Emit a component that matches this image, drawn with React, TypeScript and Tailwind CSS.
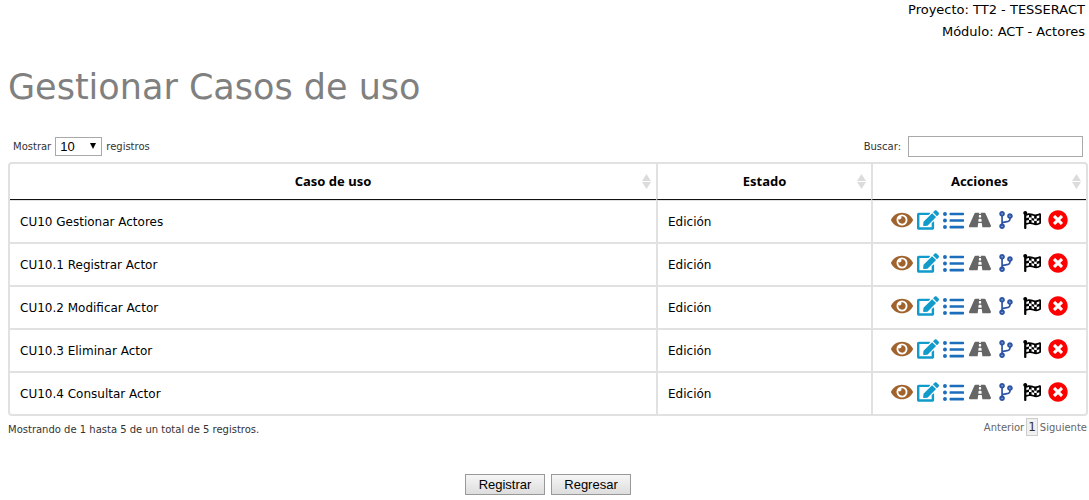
import React from "react";
import {
  FaCodeBranch,
  FaEdit,
  FaEye,
  FaFlagCheckered,
  FaListUl,
  FaRoad,
  FaTimesCircle,
} from "react-icons/fa";

const useCases = [
  "CU10 Gestionar Actores",
  "CU10.1 Registrar Actor",
  "CU10.2 Modificar Actor",
  "CU10.3 Eliminar Actor",
  "CU10.4 Consultar Actor",
];

const actions = [
  { label: "Consultar", Icon: FaEye, style: "text-[#a0632d] w-[22px] h-5" },
  { label: "Modificar", Icon: FaEdit, style: "text-[#119bcb] w-[22px] h-5" },
  { label: "Términos", Icon: FaListUl, style: "text-[#1c6dbb] w-[21px] h-[21px]" },
  { label: "Trayectorias", Icon: FaRoad, style: "text-[#666666] w-[22px] h-5" },
  { label: "Puntos de extensión", Icon: FaCodeBranch, style: "text-[#2d55a5] w-[14px] h-[18px]" },
  { label: "Terminar", Icon: FaFlagCheckered, style: "text-black w-[18px] h-[18px]" },
  { label: "Eliminar", Icon: FaTimesCircle, style: "text-[#ff0000] w-5 h-5" },
];

const columns = [
  { title: "Caso de uso", style: "" },
  { title: "Estado", style: "w-[215px] border-l-2" },
  { title: "Acciones", style: "w-[215px] border-l-2" },
];

const buttonStyle =
  "h-[21px] w-20 border border-[#999999] bg-linear-to-b from-[#f6f6f6] to-[#dddddd] font-['Liberation_Sans',sans-serif] text-[13px] leading-[18px]";

function SortIcon() {
  return (
    <svg viewBox="0 0 9 15" className="h-[15px] w-[9px] fill-[#dcdcdc]" aria-hidden="true">
      <path d="M4.5 0 9 7H0zM0 8h9l-4.500 7z" />
    </svg>
  );
}

export default function App() {
  return (
    <main className="bg-white pr-px pl-2 font-['DejaVu_Sans',sans-serif] text-black">
      <header className="pr-[3px] text-right text-[13px] leading-[22px]">
        <p className="-mt-px">Proyecto: TT2 - TESSERACT</p>
        <p>Módulo: ACT - Actores</p>
      </header>

      <h1 className="mt-5 text-[35px] leading-[48px] text-[#808080]">Gestionar Casos de uso</h1>

      <div className="mt-[25px] flex items-center justify-between pr-[5px] pl-[5px] text-[10px] text-[#333333]">
        <label className="flex items-center gap-1">
          Mostrar
          <span className="relative flex">
            <select className="h-[19px] w-[47px] appearance-none border border-[#a9a9a9] bg-white pl-1 font-['Liberation_Sans',sans-serif] text-[13px] leading-4 text-black">
              <option>10</option>
              <option>25</option>
              <option>50</option>
            </select>
            <svg viewBox="0 0 6 6" className="pointer-events-none absolute top-[6px] right-[6px] h-[6px] w-[6px]" aria-hidden="true">
              <path d="M0 0h6L3 6z" />
            </svg>
          </span>
          registros
        </label>
        <label className="flex items-center gap-[7px]">
          Buscar:
          <input type="text" className="h-[21px] w-[175px] border border-[#a9a9a9] bg-white px-1 text-[13px]" />
        </label>
      </div>

      <div className="mt-[5px] rounded-[4px] border-2 border-[#e1e1e1]">
        <table className="w-full table-fixed border-separate border-spacing-0 text-[12px]">
          <thead>
            <tr>
              {columns.map((column) => (
                <th
                  key={column.title}
                  className={`h-[36px] border-b border-[#e1e1e1] border-b-[#111111] p-0 font-['Noto_Sans',sans-serif] text-[13px] font-bold ${column.style}`}
                >
                  <div className="grid grid-cols-[10px_1fr_10px] items-center px-1">
                    <span className="col-start-2">{column.title}</span>
                    <SortIcon />
                  </div>
                </th>
              ))}
            </tr>
          </thead>
          <tbody className="[&>tr:first-child>td]:h-[44px] [&>tr:first-child>td]:border-t [&>tr:last-child>td]:h-[41px] [&>tr:last-child>td]:border-b-0">
            {useCases.map((name) => (
              <tr key={name}>
                <td className="h-[43px] border-b-2 border-[#e1e1e1] py-0 pr-2 pl-[10px]">{name}</td>
                <td className="h-[43px] border-b-2 border-l-2 border-[#e1e1e1] py-0 pr-2 pl-[10px]">Edición</td>
                <td className="h-[43px] border-b-2 border-l-2 border-[#e1e1e1] p-0">
                  <div className="flex items-center justify-center pb-[3px]">
                    {actions.map(({ label, Icon, style }) => (
                      <button key={label} type="button" aria-label={label} className="flex h-6 w-[26px] items-center justify-center">
                        <Icon className={style} />
                      </button>
                    ))}
                  </div>
                </td>
              </tr>
            ))}
          </tbody>
        </table>
      </div>

      <div className="mt-[2px] flex items-start justify-between text-[10px] text-[#333333]">
        <p className="pt-1 leading-4">Mostrando de 1 hasta 5 de un total de 5 registros.</p>
        <nav className="flex items-center gap-[2px] pr-px text-[#666666]">
          <a href="#anterior">Anterior</a>
          <a href="#1" className="border border-[#cccccc] bg-[#f0f0f0] px-px text-[12px] leading-4 text-[#333333]">1</a>
          <a href="#siguiente">Siguiente</a>
        </nav>
      </div>

      <div className="mt-[36px] flex justify-center gap-[6px]">
        <button type="button" className={buttonStyle}>Registrar</button>
        <button type="button" className={buttonStyle}>Regresar</button>
      </div>
    </main>
  );
}
